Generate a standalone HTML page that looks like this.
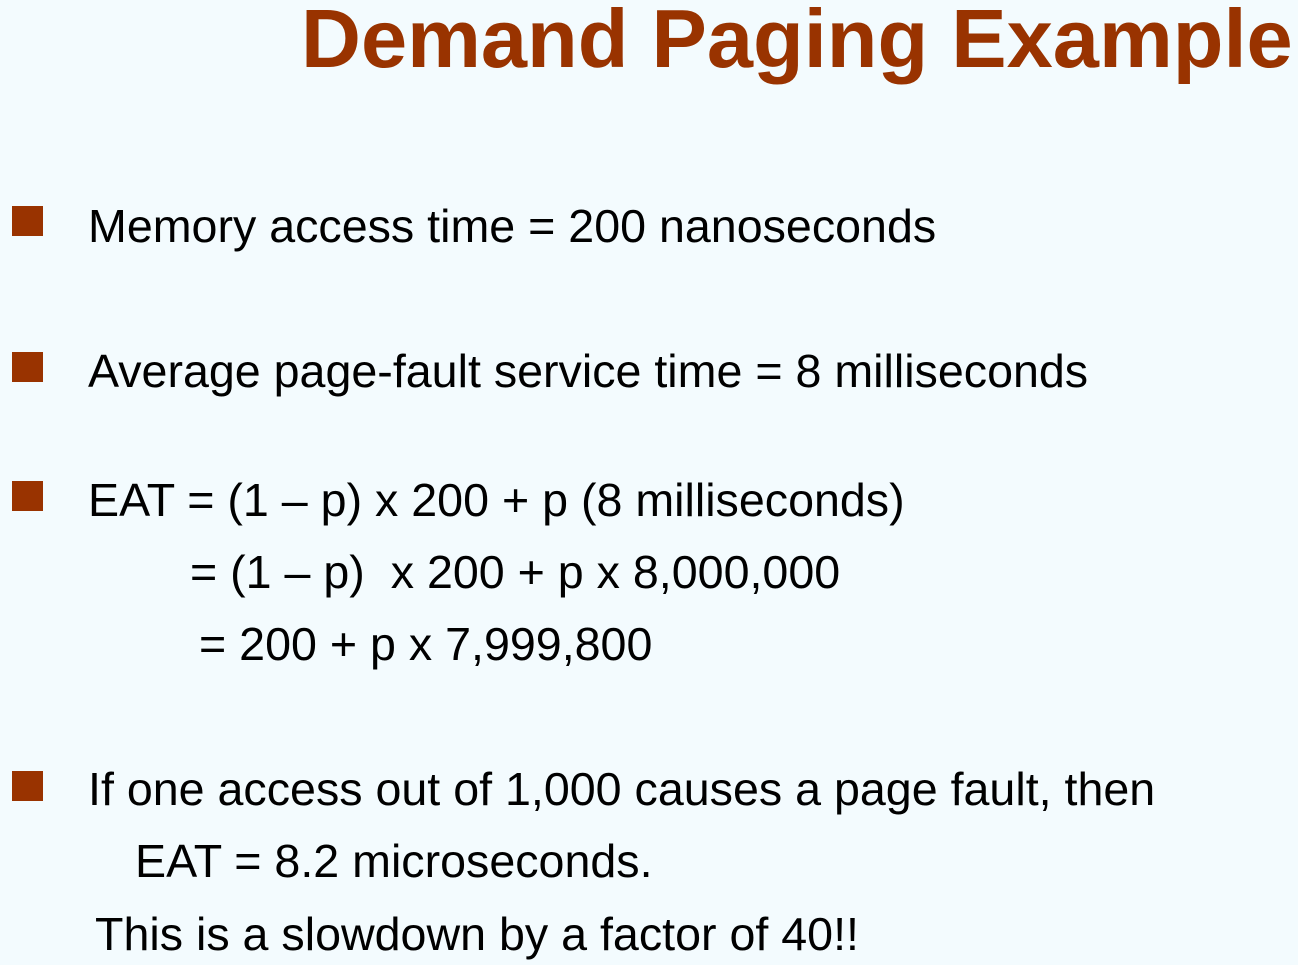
<!DOCTYPE html>
<html><head><style>
body{margin:0;width:1298px;height:965px;background:#f3fbfe;position:relative;overflow:hidden;font-family:"Liberation Sans",Arial,sans-serif}
.t{position:absolute;white-space:nowrap;line-height:1}
.h{font-weight:bold;color:#993300;font-size:83px;left:301px;top:-3px}
.l{font-size:46.6px;color:#000}
.b{position:absolute;left:12px;width:31px;height:30px;background:#993300}
</style></head><body>
<div class="t h">Demand Paging Example</div>
<div class="b" style="top:206px"></div>
<div class="b" style="top:352px"></div>
<div class="b" style="top:481px"></div>
<div class="b" style="top:771px"></div>
<div class="t l" style="left:88px;top:203px">Memory access time = 200 nanoseconds</div>
<div class="t l" style="left:88px;top:348px">Average page-fault service time = 8 milliseconds</div>
<div class="t l" style="left:88px;top:477px">EAT = (1 – p) x 200 + p (8 milliseconds)</div>
<div class="t l" style="left:190px;top:549px">= (1 – p)&nbsp; x 200 + p x 8,000,000</div>
<div class="t l" style="left:199px;top:621px">= 200 + p x 7,999,800</div>
<div class="t l" style="left:88px;top:766px">If one access out of 1,000 causes a page fault, then</div>
<div class="t l" style="left:135px;top:838px">EAT = 8.2 microseconds.</div>
<div class="t l" style="left:95px;top:911px">This is a slowdown by a factor of 40!!</div>
</body></html>
